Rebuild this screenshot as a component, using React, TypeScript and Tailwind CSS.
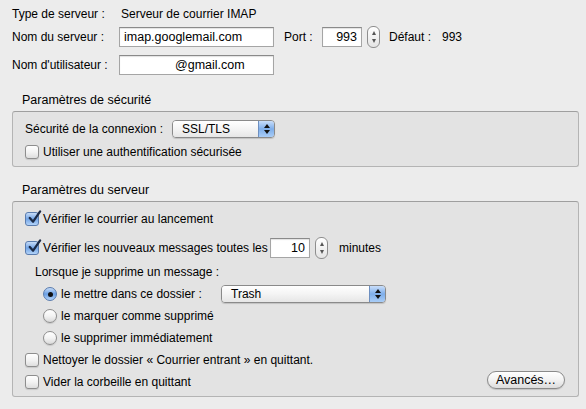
import React from 'react';

const FONT = { fontFamily: '"Liberation Sans", Arial, sans-serif' };

function TextBox({ value, className, align = 'left' }: { value: string; className: string; align?: 'left' | 'right' | 'center' }) {
  const a = align === 'right' ? 'justify-end' : align === 'center' ? 'justify-center' : 'justify-start';
  return (
    <div
      className={`flex items-center ${a} shrink-0 bg-white border border-[#a5a5a5] border-t-[#8a8a8a] shadow-[inset_0_1px_1px_rgba(0,0,0,0.12)] px-[4px] text-[12.5px] ${className}`}
    >
      {value}
    </div>
  );
}

function Stepper() {
  return (
    <div className="w-[13px] h-[22px] rounded-[6px] border border-[#8e8e8e] bg-gradient-to-b from-white to-[#e4e4e4] flex flex-col items-center justify-between py-[4px]">
      <div className="w-0 h-0 border-l-[2.5px] border-r-[2.5px] border-b-[4px] border-l-transparent border-r-transparent border-b-[#555]" />
      <div className="w-0 h-0 border-l-[2.5px] border-r-[2.5px] border-t-[4px] border-l-transparent border-r-transparent border-t-[#555]" />
    </div>
  );
}

function PopUp({ value, className }: { value: string; className: string }) {
  return (
    <div className={`flex shrink-0 h-[18px] rounded-[4px] border border-[#8a8a8a] overflow-hidden shadow-[0_1px_1px_rgba(0,0,0,0.15)] ${className}`}>
      <div className="flex-1 flex items-center pl-[9px] text-[12px] bg-gradient-to-b from-white via-[#f4f4f4] to-[#e6e6e6]">{value}</div>
      <div className="w-[16px] border-l border-[#6d8fc0] bg-gradient-to-b from-[#c9defa] via-[#7eaeea] to-[#a9cdf7] flex flex-col items-center justify-center gap-[2px]">
        <div className="w-0 h-0 border-l-[3px] border-r-[3px] border-b-[4px] border-l-transparent border-r-transparent border-b-[#111]" />
        <div className="w-0 h-0 border-l-[3px] border-r-[3px] border-t-[4px] border-l-transparent border-r-transparent border-t-[#111]" />
      </div>
    </div>
  );
}

function CheckBox({ checked }: { checked?: boolean }) {
  if (checked) {
    return (
      <div className="relative w-[14px] h-[14px] rounded-[3px] border border-[#5a7cae] bg-gradient-to-b from-[#c6dcf8] via-[#73a5e6] to-[#b3d3f8] shrink-0">
        <svg viewBox="0 0 16 16" className="absolute left-[1px] -top-[3px] w-[15px] h-[15px]">
          <path d="M3 8.5 L6.5 12.5 L14 1.5" fill="none" stroke="#1b2a46" strokeWidth="2.4" strokeLinecap="round" strokeLinejoin="round" />
        </svg>
      </div>
    );
  }
  return (
    <div className="w-[14px] h-[14px] rounded-[3px] border border-[#8e8e8e] bg-gradient-to-b from-white via-[#f3f3f3] to-[#dedede] shadow-[0_1px_1px_rgba(0,0,0,0.12)] shrink-0" />
  );
}

function Radio({ checked }: { checked?: boolean }) {
  if (checked) {
    return (
      <div className="w-[14px] h-[14px] rounded-full border border-[#5a7cae] bg-gradient-to-b from-[#c6dcf8] via-[#6b9fe3] to-[#b3d3f8] flex items-center justify-center shrink-0">
        <div className="w-[5px] h-[5px] rounded-full bg-[#111]" />
      </div>
    );
  }
  return (
    <div className="w-[14px] h-[14px] rounded-full border border-[#8e8e8e] bg-gradient-to-b from-white via-[#f3f3f3] to-[#d9d9d9] shadow-[0_1px_1px_rgba(0,0,0,0.12)] shrink-0" />
  );
}

export default function App() {
  return (
    <div className="w-[586px] h-[409px] bg-[#ececec] text-[12px] text-black overflow-hidden whitespace-nowrap" style={FONT}>
      {/* Server identity */}
      <div className="pl-[12px] pt-[6px]">
        <div className="flex items-center h-[16px]">
          <span className="w-[109px] shrink-0">Type de serveur :</span>
          <span>Serveur de courrier IMAP</span>
        </div>
        <div className="flex items-center h-[22px] mt-[4px]">
          <span className="w-[107px] shrink-0">Nom du serveur :</span>
          <TextBox value="imap.googlemail.com" className="w-[155px] h-[20px]" />
          <span className="ml-[10px] w-[38px] shrink-0">Port :</span>
          <TextBox value="993" align="right" className="w-[40px] h-[20px]" />
          <div className="ml-[5px]"><Stepper /></div>
          <span className="ml-[9px] w-[53px] shrink-0">Défaut :</span>
          <span>993</span>
        </div>
        <div className="flex items-center h-[20px] mt-[7px]">
          <span className="w-[107px] shrink-0">Nom d'utilisateur :</span>
          <TextBox value="@gmail.com" className="w-[155px] h-[20px] pl-[55px]" />
        </div>
      </div>

      {/* Security */}
      <div className="pl-[22px] mt-[17px] text-[12.5px] h-[16px] flex items-center">Paramètres de sécurité</div>
      <div className="ml-[12px] mr-[7px] mt-[3px] h-[56px] rounded-[3px] border border-[#b4b4b4] border-t-[#9f9f9f] bg-[#e3e3e3] pl-[12px] pt-[8px]">
        <div className="flex items-center h-[18px]">
          <span className="w-[147px] shrink-0">Sécurité de la connexion :</span>
          <PopUp value="SSL/TLS" className="w-[103px]" />
        </div>
        <div className="flex items-center h-[14px] mt-[7px] gap-[4px]">
          <CheckBox />
          <span>Utiliser une authentification sécurisée</span>
        </div>
      </div>

      {/* Server settings */}
      <div className="pl-[22px] mt-[15px] text-[12.5px] h-[16px] flex items-center">Paramètres du serveur</div>
      <div className="ml-[12px] mr-[7px] mt-[3px] h-[196px] rounded-[3px] border border-[#b4b4b4] border-t-[#9f9f9f] bg-[#e3e3e3] pl-[12px] pr-[13px] pt-[10px]">
        <div className="flex items-center h-[14px] gap-[4px]">
          <CheckBox checked />
          <span>Vérifier le courrier au lancement</span>
        </div>
        <div className="flex items-center h-[22px] mt-[11px]">
          <CheckBox checked />
          <span className="ml-[4px] w-[227px] shrink-0">Vérifier les nouveaux messages toutes les</span>
          <TextBox value="10" align="right" className="w-[40px] h-[20px]" />
          <div className="ml-[5px]"><Stepper /></div>
          <span className="ml-[11px]">minutes</span>
        </div>
        <div className="pl-[10px] h-[16px] mt-[5px] flex items-center">Lorsque je supprime un message :</div>
        <div className="pl-[18px] mt-[5px]">
          <div className="flex items-center h-[18px]">
            <Radio checked />
            <span className="ml-[4px] w-[160px] shrink-0">le mettre dans ce dossier :</span>
            <PopUp value="Trash" className="w-[165px]" />
          </div>
          <div className="flex items-center h-[14px] mt-[6px] gap-[4px]">
            <Radio />
            <span>le marquer comme supprimé</span>
          </div>
          <div className="flex items-center h-[14px] mt-[8px] gap-[4px]">
            <Radio />
            <span>le supprimer immédiatement</span>
          </div>
        </div>
        <div className="flex items-center h-[14px] mt-[8px] gap-[4px]">
          <CheckBox />
          <span>Nettoyer le dossier « Courrier entrant » en quittant.</span>
        </div>
        <div className="flex items-start justify-between mt-[4px]">
          <div className="flex items-center h-[14px] gap-[4px] mt-[4px]">
            <CheckBox />
            <span>Vider la corbeille en quittant</span>
          </div>
          <div className="w-[78px] h-[18px] rounded-full border border-[#8a8a8a] bg-gradient-to-b from-white via-[#f2f2f2] to-[#dcdcdc] shadow-[0_1px_1px_rgba(0,0,0,0.15)] flex items-center justify-center text-[12.5px]">
            Avancés…
          </div>
        </div>
      </div>
    </div>
  );
}
